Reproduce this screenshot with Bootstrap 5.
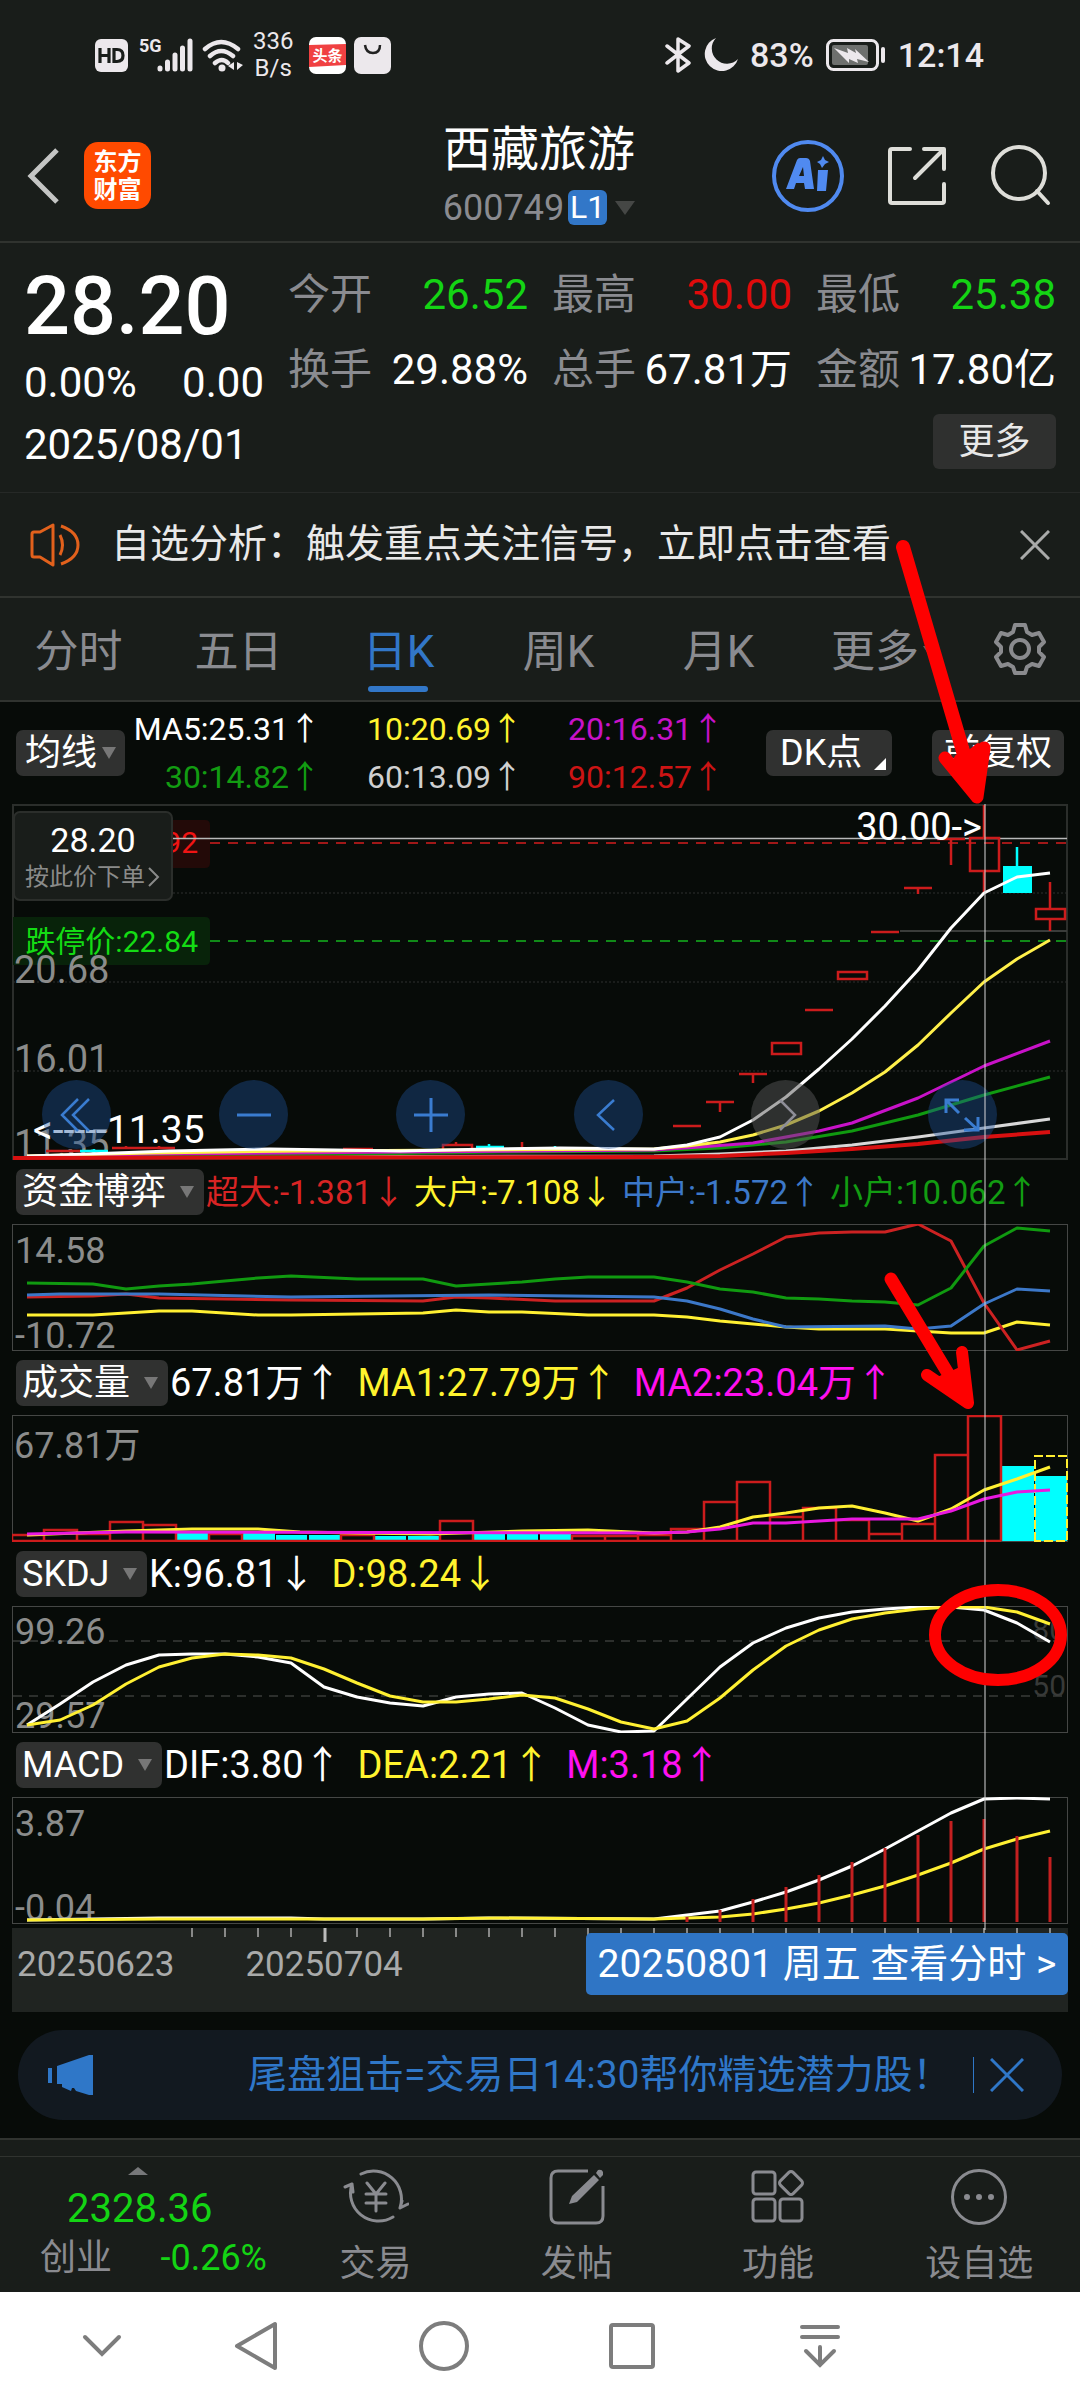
<!DOCTYPE html>
<html lang="zh-CN">
<head>
<meta charset="utf-8">
<meta name="viewport" content="width=device-width, initial-scale=1">
<title>西藏旅游 600749</title>
<link href="https://cdn.jsdelivr.net/npm/bootstrap@5.3.0/dist/css/bootstrap.min.css" rel="stylesheet">
<style>
:root{--panel:#191d1a;--ink:#070b08;--line:#30332f;--dim:#8a8b90;--blue:#3277c8;--up:#e00b0b;--down:#14d414}
body{background:var(--panel);color:#fff;font-family:Roboto,"Noto Sans CJK SC",sans-serif;line-height:1}
svg{display:block;flex:none}
a{text-decoration:none;color:inherit}
button{font-family:inherit;line-height:1;color:inherit}
.plain{background:none;border:0;padding:0}
.statusbar{height:110px;padding:0 96px 0 95px;color:#ece8ec;font-size:34px}
.status-right{gap:12px}
.rate{font-size:24px;line-height:27px}
.sysgen{font-size:18px;line-height:18px}
.signal{margin-left:11px}
.topbar{height:133px;border-bottom:2px solid var(--line);padding:0 29px 0 27px}
.brand{width:67px;height:67px;border-radius:14px;background:#ff4a00;font-size:24px;line-height:28px;font-weight:700;margin-left:24px}
.tools{gap:43px}
.stock-name{font-size:48px;line-height:64px;font-weight:400}
.stock-code{font-size:36px;line-height:52px;color:var(--dim)}
.lv{background:var(--blue);color:#fff;font-size:32px;line-height:35px;border-radius:6px;width:39px}
.caret{width:0;height:0;border:10px solid transparent;border-top:14px solid #454745;border-bottom:0}
.quote{padding:14px 24px 11px;border-bottom:1px solid #262927;font-size:42px}
.q-left{width:240px}
.price{font-size:81px;line-height:100px;font-weight:500}
.l52{line-height:52px}.l74{line-height:72px}
.q-row{line-height:75px;gap:24px}
.q-row>div{flex:1 1 0}
.q-row dt,.q-row dd{margin:0;font-weight:400}
.q-row dt{color:var(--dim)}
.t-up{color:var(--up)}.t-down{color:var(--down)}.t-dim{color:var(--dim)}
.more-btn{background:#2f302f;color:#e8e8e8;font-size:36px;width:123px;height:55px;border-radius:6px;border:0;margin-top:7px}
.notice{height:105px;border-bottom:2px solid var(--line);padding:0 30px;font-size:39px;color:#e9e9e9}
.notice-text{margin-left:31px}
.periods{height:104px;border-bottom:2px solid var(--line);font-size:44px;color:var(--dim)}
.periods .tab{width:160px;height:100%;padding:6px 3px 0 0;position:relative}
.periods .tab-more{padding-left:11px}
.periods .on{color:var(--blue)}
.periods .on::after{content:"";position:absolute;left:48px;bottom:8px;width:60px;height:6px;border-radius:3px;background:var(--blue)}
.charts{background:var(--ink);position:relative;padding:0 12px 18px}
.ma-row{height:102px;padding:0 4px}
.ma-vals{font-size:32px;line-height:48px;margin-left:8px}
.ma-vals span{white-space:nowrap}
.ma-a{width:188px;text-align:right}
.ma-b{width:199px;padding-left:46px}
.ma-c{padding-left:48px}
.pick{position:relative;display:inline-block}
.pick::after{content:"";position:absolute;right:10px;top:17px;border:7px solid transparent;border-top:12px solid #777;border-bottom:0;pointer-events:none}
.pick select{appearance:none;background:#303130;color:#fff;border:0;border-radius:7px;height:46px;line-height:46px;font-size:36px;font-family:inherit;padding:0 37px 0 6px;display:block}
.pick.tight select{padding:0 27px 0 9px}
.pick.tight::after{right:9px}
.chip{background:#303130;border:0;border-radius:7px;height:46px;font-size:36px;position:relative}
.chip-dk{width:126px;padding:0 14px}
.chip-fq{width:132px;padding:0;margin-left:40px}
.chip-dk::after{content:"";position:absolute;right:6px;bottom:6px;border-left:12px solid transparent;border-bottom:12px solid #fff}
.ind-row{height:64px;padding:0 4px;font-size:38px;gap:2px;white-space:nowrap}
.vals{gap:16px}
.vals.slim{font-size:33px;gap:9px}
.c-w{color:#fff}.c-y{color:#fff32e}.c-p{color:#c812c8}.c-m{color:#ff10f0}.c-g{color:#129c12}.c-lg{color:#d0d0d0}.c-r{color:#cc1414}.c-rr{color:#d82424}.c-b{color:#3c78c8}
.plot>svg{width:100%;height:auto}
.plot text{font-size:36px;fill:#8b8c8b}
.main-plot text{font-size:38px}
.plot .tag{font-size:30px}
.plot .lvl{font-size:30px;fill:#383a38}
.plot .peak{fill:#fff}
.crosshair{position:absolute;top:102px;left:91.1%;width:2px;height:1126px;background:rgba(215,215,215,.5);pointer-events:none}
.main-plot{position:relative}
.order-tip{position:absolute;left:1px;top:7px;width:160px;height:90px;background:var(--panel);border:2px solid #2b2e2b;border-radius:7px;font-size:34px}
.order-tip small{font-size:24px;color:#8a8b8a;line-height:24px;white-space:nowrap}
.pads{position:absolute;left:30px;right:71px;bottom:11px}
.pad{width:69px;height:69px;border-radius:50%;background:rgba(30,82,155,.4);border:0;padding:0;color:#3a7cd0}
.pad.off{background:rgba(85,85,85,.5);color:#8e8e98}
.dates{margin-top:4px;background:#202421;height:84px;position:relative;font-size:35px;color:#a9aaa9}
.dates .ticks{position:absolute;left:0;top:0;width:100%;height:auto}
.d-one{margin-left:5px;margin-right:71px}
.day-btn{background:#2f75c5;color:#fff;border:0;border-radius:5px;font-size:39px;height:62px;width:482px;padding:0;white-space:nowrap;position:relative}
.line-up{height:72px}
.promo{margin:18px 6px 0;height:90px;border-radius:45px;background:#121920;color:#2f77c8;font-size:39px;padding:0 38px 0 30px}
.promo-text{margin-left:154px;white-space:nowrap}
.rule{width:1px;height:36px;background:#2f77c8}
.gapbar{height:18px;border-top:2px solid var(--line)}
.actions{height:136px;border-top:1px solid var(--line);font-size:36px;color:var(--dim)}
.idx{width:275px;color:var(--down);position:relative;padding-left:40px;padding-right:8px}
.idx-mark{position:absolute;left:128px;top:10px}
.idx-val{font-size:40px;line-height:48px;padding:28px 0 0 27px}
.idx-row{line-height:50px}
.act{flex:1 1 0}
.act svg{margin:9px auto 16px}
.act span{line-height:40px}
.sysnav{background:#fff;height:108px}
.sysnav button{width:188px;height:108px;color:#7d7d7d}
.sysnav .first{width:162px;padding-left:42px}
.marks{position:absolute;left:0;top:0;width:100%;height:auto;pointer-events:none}
</style>
<script src="https://cdn.jsdelivr.net/npm/bootstrap@5.3.0/dist/js/bootstrap.bundle.min.js"></script>
</head>
<body>
<div class="position-relative overflow-hidden">

<div class="statusbar d-flex align-items-center justify-content-between">
  <div class="d-flex align-items-center">
    <svg width="33" height="33" viewBox="0 0 33 33"><rect width="33" height="33" rx="6" fill="#ece8ec"/><path d="M5 9v15M14 9v15M5 16.500h9M19 10.500v12h3q6 0 6-6t-6-6z" fill="none" stroke="#191d1a" stroke-width="3.200"/></svg>
    <div class="signal position-relative">
      <svg width="54" height="36" viewBox="0 0 54 36"><g stroke="#ece8ec" stroke-width="5" stroke-linecap="round"><path d="M21 31v1M28.500 25v7M36 18v14M43.500 11v21M51 4v28"/></g></svg>
      <span class="sysgen position-absolute top-0 start-0 fw-bold">5G</span>
    </div>
    <svg class="ms-2" width="44" height="36" viewBox="0 0 44 36" fill="none" stroke="#ece8ec" stroke-width="4.500" stroke-linecap="round"><path d="M4 12q16-14 33 0M9 19q11-10 23 0M14 26q7-6 13 0"/><circle cx="21" cy="31" r="3.500" fill="#ece8ec" stroke="none"/><path d="M33 25v8l-6-4zM36 25v8l6-5z" fill="#ece8ec" stroke="none"/></svg>
    <div class="rate text-center ms-2">336<br>B/s</div>
    <div class="d-flex gap-2 ms-3">
      <svg width="37" height="37" viewBox="0 0 37 37"><rect width="37" height="37" rx="7" fill="#fff"/><path d="M0 8l37-1v21l-37 2z" fill="#f04142"/><text x="18.500" y="24" text-anchor="middle" font-size="15" font-weight="700" fill="#fff">头条</text></svg>
      <svg width="37" height="37" viewBox="0 0 37 37"><rect width="37" height="37" rx="7" fill="#ece8ec"/><path d="M11 8q1 8 8 8t7-8" fill="none" stroke="#222" stroke-width="2.500"/></svg>
    </div>
  </div>
  <div class="status-right d-flex align-items-center fw-medium">
    <svg width="28" height="36" viewBox="0 0 28 36" fill="none" stroke="#ece8ec" stroke-width="3.500" stroke-linejoin="round" stroke-linecap="round"><path d="M3 9l22 17-11 8V2l11 7L3 26"/></svg>
    <svg width="34" height="34" viewBox="1 0 34 34"><path d="M13 0a17 17 0 1 0 22 21A15 15 0 0 1 13 0z" fill="#ece8ec"/></svg>
    <span>83%</span>
    <svg width="60" height="32" viewBox="0 0 60 32"><rect x="1.500" y="1.500" width="50" height="29" rx="6" fill="none" stroke="#ece8ec" stroke-width="3"/><rect x="6" y="6" width="36" height="20" rx="2" fill="#6e706e"/><path d="M8 9l14 5-1-5 9 5-1-4 14 13-12-3 1 4-9-4v4z" fill="#ece8ec"/><path d="M57 10v12" stroke="#ece8ec" stroke-width="4" stroke-linecap="round"/></svg>
    <span>12:14</span>
  </div>
</div>

<header class="topbar d-flex align-items-center">
  <div class="d-flex align-items-center flex-fill w-25">
    <button class="plain" aria-label="返回"><svg width="33" height="56" viewBox="0 0 33 56" fill="none" stroke="#c4c5c4" stroke-width="5"><path d="M30 2L4 28l26 26"/></svg></button>
    <div class="brand d-flex flex-column justify-content-center text-center"><span>东方</span><span>财富</span></div>
  </div>
  <div class="text-center">
    <h1 class="stock-name m-0">西藏旅游</h1>
    <div class="stock-code d-flex align-items-center justify-content-center"><span>600749</span><span class="lv ms-1">L1</span><i class="caret ms-2"></i></div>
  </div>
  <div class="tools d-flex align-items-center justify-content-end flex-fill w-25">
    <button class="plain" aria-label="Ai"><svg width="72" height="72" viewBox="0 0 72 72"><circle cx="36" cy="36" r="34" fill="none" stroke="#508af0" stroke-width="4"/><path fill="#508af0" fill-rule="evenodd" d="M14 49L25 20q1-2 3-2h6q3 0 4 3l4 28h-9l-1-6h-8l-2 6zM27 36h5l-1-9zM46 30h10l-2 21h-9zM51 16l2 4 4 2-4 2-3 4-2-4-3-2 4-2z"/></svg></button>
    <button class="plain" aria-label="分享"><svg width="60" height="60" viewBox="0 0 60 60" fill="none" stroke="#deded9" stroke-width="4" stroke-linecap="round" stroke-linejoin="round"><path d="M23 3H5q-2 0-2 2v50q0 2 2 2h50q2 0 2-2V38M37 3h20v20M56 4L28 32"/></svg></button>
    <button class="plain" aria-label="搜索"><svg width="61" height="61" viewBox="0 0 61 61" fill="none" stroke="#deded9" stroke-width="4" stroke-linecap="round"><circle cx="29" cy="28" r="26"/><path d="M47 46l11 12"/></svg></button>
  </div>
</header>

<section class="quote d-flex gap-4">
  <div class="q-left">
    <div class="price">28.20</div>
    <div class="l52 d-flex justify-content-between"><span>0.00%</span><span>0.00</span></div>
    <div class="l74">2025/08/01</div>
  </div>
  <div class="flex-fill">
    <dl class="m-0">
      <div class="q-row d-flex">
        <div class="d-flex justify-content-between"><dt>今开</dt><dd class="t-down">26.52</dd></div>
        <div class="d-flex justify-content-between"><dt>最高</dt><dd class="t-up">30.00</dd></div>
        <div class="d-flex justify-content-between"><dt>最低</dt><dd class="t-down">25.38</dd></div>
      </div>
      <div class="q-row d-flex">
        <div class="d-flex justify-content-between"><dt>换手</dt><dd>29.88%</dd></div>
        <div class="d-flex justify-content-between"><dt>总手</dt><dd>67.81万</dd></div>
        <div class="d-flex justify-content-between"><dt>金额</dt><dd>17.80亿</dd></div>
      </div>
    </dl>
    <div class="text-end"><button class="more-btn">更多</button></div>
  </div>
</section>

<div class="notice d-flex align-items-center">
  <svg width="50" height="44" viewBox="0 0 50 44" fill="none" stroke="#e2611c" stroke-width="3" stroke-linejoin="round"><path d="M2 11q0-2 2-2h6L23 2v40L10 34H4q-2 0-2-2zM30 12q5 10 0 20M31 3q17 6 17 19T31 41"/></svg>
  <span class="notice-text text-nowrap">自选分析：触发重点关注信号，立即点击查看</span>
  <button class="plain ms-auto" aria-label="关闭"><svg width="30" height="30" viewBox="0 0 30 30" stroke="#a9aaa9" stroke-width="3"><path d="M1 1l28 28M29 1L1 29"/></svg></button>
</div>

<nav class="periods d-flex align-items-center">
  <a href="#" class="tab d-flex align-items-center justify-content-center">分时</a>
  <a href="#" class="tab d-flex align-items-center justify-content-center">五日</a>
  <a href="#" class="tab on d-flex align-items-center justify-content-center">日K</a>
  <a href="#" class="tab d-flex align-items-center justify-content-center">周K</a>
  <a href="#" class="tab d-flex align-items-center justify-content-center">月K</a>
  <a href="#" class="tab tab-more d-flex align-items-center justify-content-center">更多<svg width="18" height="12" viewBox="0 0 18 12"><path d="M4 0h14l-7 11z" fill="#606260"/></svg></a>
  <button class="plain flex-fill" aria-label="设置"><svg class="mx-auto" width="54" height="54" viewBox="0 0 54 54" fill="none" stroke="#8a8b8e" stroke-width="4" stroke-linejoin="round"><path d="M22 3h10l2 7 5 3 7-2 5 9-5 5v5l5 5-5 9-7-2-5 3-2 6H22l-2-6-5-3-7 2-5-9 5-5v-5l-5-5 5-9 7 2 5-3z"/><circle cx="27" cy="27" r="9"/></svg></button>
</nav>

<main class="charts">
  <div class="ma-row d-flex align-items-center">
    <label class="pick tight"><select aria-label="均线"><option>均线</option></select></label>
    <div class="ma-vals">
      <div class="d-flex"><span class="ma-a c-w">MA5:25.31↑</span><span class="ma-b c-y">10:20.69↑</span><span class="ma-c c-p">20:16.31↑</span></div>
      <div class="d-flex"><span class="ma-a c-g">30:14.82↑</span><span class="ma-b c-lg">60:13.09↑</span><span class="ma-c c-r">90:12.57↑</span></div>
    </div>
    <button class="chip chip-dk ms-auto text-start">DK点</button>
    <button class="chip chip-fq">前复权</button>
  </div>

  <div class="plot main-plot">
    <svg viewBox="12 804 1056 356">
      <rect x="13" y="805" width="1054" height="354" fill="none" stroke="#2b2e2b" stroke-width="2"/>
      <path d="M13 893H1067M13 982H1067M13 1071H1067" stroke="#2e312e" stroke-width="1" stroke-dasharray="2 2"/>
      <path d="M13 820H205q5 0 5 5v38q0 5-5 5H13z" fill="#230a08"/>
      <path d="M13 917H205q5 0 5 5v38q0 5-5 5H13z" fill="#08230a"/>
      <text class="tag" x="198" y="853" text-anchor="end" style="fill:#f01414">涨停价:27.92</text>
      <text class="tag" x="198" y="952" text-anchor="end" style="fill:#14dc14">跌停价:22.84</text>
      <path d="M172 838.500H1067" stroke="#b8b9b8" stroke-width="1.500"/>
      <path d="M900 931H1067" stroke="#3a3c3a" stroke-width="2"/>
      <path d="M210 843H1067" stroke="#a01818" stroke-width="2" stroke-dasharray="10 8"/>
      <path d="M210 941H1067" stroke="#108a18" stroke-width="2" stroke-dasharray="10 8"/>
      <text x="14" y="983">20.68</text><text x="14" y="1072">16.01</text><text x="14" y="1157">11.35</text>
      <g fill="none" stroke="#cc1c1c" stroke-width="2.500">
        <path d="M46 1151h34M112 1148h63M343 1149h30M443 1145h29v5h-29zM522 1142v5M456 1142v3M126 1146v2M159 1146v2"/>
        <path d="M673 1126h28M706 1102h28M720 1102v10M739 1074h28M753 1074v9M805 1010h28M871 932h28M904 888h28M918 888v6M937 839h28M951 839v26"/>
        <path d="M772 1043h29v11h-29zM838 972h29v7h-29zM970 838h29v33h-29zM1036 909h29v10h-29zM984 805v33M984 871v23M1050 882v27M1050 919v12"/>
      </g>
      <path d="M1017 847v20" stroke="#0ff" stroke-width="2.500"/><rect x="1003" y="866" width="29" height="27" fill="#0ff"/>
      <path d="M80 1151h28M94 1149v4M476 1147h28M489 1144v5M555 1146v3" stroke="#0ff" stroke-width="2.500"/>
      <g fill="none" stroke-width="3" stroke-linejoin="round">
        <path stroke="#d8d8d8" d="M27 1157L654 1156 720 1154 786 1151 852 1145 918 1137 984 1128 1050 1119"/>
        <path stroke="#109a10" d="M27 1157L300 1155 500 1152 654 1151 720 1148 786 1142 852 1131 918 1115 984 1095 1050 1077"/>
        <path stroke="#c812c8" d="M27 1157L150 1154 400 1152 654 1150 700 1147 753 1143 819 1131 852 1123 918 1098 984 1066 1050 1041"/>
        <path stroke="#fff04a" d="M27 1156L150 1153 300 1151 654 1149 687 1146 720 1142 753 1135 786 1125 819 1111 852 1093 885 1072 918 1045 951 1013 984 982 1017 959 1050 940"/>
        <path stroke="#fff" d="M27 1156L60 1155 170 1151 270 1149 400 1151 490 1149 560 1148 654 1149 687 1145 720 1137 753 1120 786 1097 819 1069 852 1039 885 1006 918 970 951 928 984 893 1017 877 1050 873"/>
        <path stroke="#d81010" stroke-width="4" d="M13 1158L654 1157 720 1156 786 1153 852 1149 918 1144 984 1137 1050 1132"/>
      </g>
      <text class="peak" x="982" y="840" text-anchor="end">30.00-&gt;</text>
      <text class="peak" x="33" y="1143" style="font-size:39px">&lt;-----11.35</text>
    </svg>
    <button class="order-tip p-0 d-flex flex-column align-items-center justify-content-center gap-2 text-white"><span>28.20</span><small class="d-flex align-items-center">按此价下单<svg width="16" height="22" viewBox="0 0 16 22" fill="none" stroke="#8a8b8a" stroke-width="2"><path d="M4 2l9 9-9 9"/></svg></small></button>
    <div class="pads d-flex justify-content-between">
      <button class="pad" aria-label="最左"><svg class="mx-auto" width="34" height="34" viewBox="0 0 34 34" fill="none" stroke="currentColor" stroke-width="2.500"><path d="M18 1L2 17l16 16M29 1L13 17l16 16"/></svg></button>
      <button class="pad" aria-label="缩小"><svg class="mx-auto" width="34" height="34" viewBox="0 0 34 34" stroke="currentColor" stroke-width="3"><path d="M0 17h34"/></svg></button>
      <button class="pad" aria-label="放大"><svg class="mx-auto" width="34" height="34" viewBox="0 0 34 34" stroke="currentColor" stroke-width="3"><path d="M0 17h34M17 0v34"/></svg></button>
      <button class="pad" aria-label="左移"><svg class="mx-auto" width="34" height="34" viewBox="0 0 34 34" fill="none" stroke="currentColor" stroke-width="2.500"><path d="M23 2L7 17l16 15"/></svg></button>
      <button class="pad off" aria-label="右移"><svg class="mx-auto" width="34" height="34" viewBox="0 0 34 34" fill="none" stroke="currentColor" stroke-width="2.500"><path d="M12 2l15 15-15 15"/></svg></button>
      <button class="pad" aria-label="全屏"><svg class="mx-auto" width="36" height="36" viewBox="0 0 36 36" fill="none" stroke="currentColor" stroke-width="3"><path d="M2 16V3h13M3 4l12 12M34 20v13H20M33 32L21 21"/></svg></button>
    </div>
  </div>

  <div class="ind-row d-flex align-items-center">
    <label class="pick"><select aria-label="资金博弈"><option>资金博弈</option></select></label>
    <div class="vals slim d-flex"><span class="c-rr">超大:-1.381↓</span><span class="c-y">大户:-7.108↓</span><span class="c-b">中户:-1.572↑</span><span class="c-g">小户:10.062↑</span></div>
  </div>
  <div class="plot">
    <svg viewBox="12 1224 1056 127">
      <rect x="12.500" y="1224.500" width="1055" height="126" fill="none" stroke="#454745"/>
      <text x="15" y="1263">14.58</text><text x="15" y="1348">-10.72</text>
      <g fill="none" stroke-width="3" stroke-linejoin="round">
        <path stroke="#fff032" d="M27 1315L93 1315 126 1313 159 1311 192 1311 258 1315 291 1315 357 1314 423 1313 456 1310 489 1312 522 1312 588 1315 654 1315 687 1317 720 1321 753 1324 786 1327 819 1329 885 1329 918 1331 951 1333 984 1333 1017 1322 1050 1325"/>
        <path stroke="#cc2222" d="M27 1297L93 1296 126 1294 159 1298 225 1299 291 1300 423 1301 456 1297 489 1298 555 1301 654 1301 687 1288 720 1270 753 1254 786 1237 819 1233 852 1232 885 1232 918 1224 951 1241 984 1303 1017 1350 1050 1341"/>
        <path stroke="#109a10" d="M27 1283L93 1284 126 1289 159 1286 192 1284 225 1281 258 1278 291 1276 357 1279 423 1279 456 1286 522 1282 555 1279 588 1277 654 1277 687 1282 720 1289 753 1292 786 1298 819 1299 852 1301 885 1302 918 1305 951 1288 984 1246 1017 1228 1050 1231"/>
        <path stroke="#3c78c8" d="M27 1295L60 1294 159 1294 291 1297 390 1296 489 1295 654 1297 687 1301 720 1309 753 1319 786 1327 885 1326 918 1329 951 1326 984 1304 1017 1289 1050 1291"/>
      </g>
    </svg>
  </div>

  <div class="ind-row d-flex align-items-center">
    <label class="pick"><select aria-label="成交量"><option>成交量</option></select></label>
    <div class="vals d-flex"><span class="c-w">67.81万↑</span><span class="c-y">MA1:27.79万↑</span><span class="c-m">MA2:23.04万↑</span></div>
  </div>
  <div class="plot">
    <svg viewBox="12 1415 1056 127">
      <rect x="12.500" y="1415.500" width="1055" height="126" fill="none" stroke="#454745"/>
      <text x="14" y="1458">67.81万</text>
      <g fill="#0ff"><path d="M177 1533h31v8h-31zM243 1533h32v8h-32zM276 1535h31v6h-31zM309 1535h31v6h-31zM375 1536h31v5h-31zM408 1536h31v5h-31zM474 1534h31v7h-31zM507 1534h31v7h-31zM540 1534h31v7h-31zM1002 1466h32v75h-32zM1035 1476h32v65h-32z"/></g>
      <path fill="none" stroke="#cc1c1c" stroke-width="2.500" d="M12 1541V1535h32V1541M44 1541V1530h33V1541M77 1541V1534h33V1541M110 1541V1522h33V1541M143 1541V1525h33V1541M209 1541V1534h33V1541M341 1541V1535h33V1541M440 1541V1521h33V1541M572 1541V1536h33V1541M605 1541V1536h33V1541M638 1541V1535h33V1541M671 1541V1529h33V1541M704 1541V1502h33V1541M737 1541V1482h33V1541M770 1541V1517h33V1541M803 1541V1508h33V1541M836 1541V1520h33V1541M869 1541V1534h33V1541M902 1541V1524h33V1541M935 1541V1455h33V1541M968 1541V1416h33V1541M12 1541H1001"/>
      <path d="M1035 1541V1456h32v85z" fill="none" stroke="#ffee30" stroke-width="2" stroke-dasharray="9 3"/>
      <g fill="none" stroke-width="3" stroke-linejoin="round">
        <path stroke="#fff032" d="M27 1535L126 1531 192 1529 258 1529 300 1532 357 1533 430 1534 522 1531 588 1530 654 1533 687 1532 720 1527 753 1517 786 1513 819 1508 852 1506 885 1513 918 1521 951 1509 984 1490 1017 1479 1050 1467"/>
        <path stroke="#e818e0" d="M27 1534L126 1532 654 1533 687 1532 720 1529 753 1523 786 1523 819 1521 852 1519 918 1519 951 1511 984 1499 1017 1492 1050 1490"/>
      </g>
    </svg>
  </div>

  <div class="ind-row d-flex align-items-center">
    <label class="pick"><select aria-label="SKDJ"><option>SKDJ</option></select></label>
    <div class="vals d-flex"><span class="c-w">K:96.81↓</span><span class="c-y">D:98.24↓</span></div>
  </div>
  <div class="plot">
    <svg viewBox="12 1606 1056 127">
      <rect x="12.500" y="1606.500" width="1055" height="126" fill="none" stroke="#454745"/>
      <path d="M13 1641H1067M13 1696H1067" stroke="#2c2f2c" stroke-width="2" stroke-dasharray="9 7"/>
      <text class="lvl" x="1066" y="1640" text-anchor="end">80</text><text class="lvl" x="1066" y="1696" text-anchor="end">50</text>
      <text x="15" y="1644">99.26</text><text x="15" y="1728">29.57</text>
      <g fill="none" stroke-width="3" stroke-linejoin="round">
        <path stroke="#fff" d="M27 1725L60 1704 93 1682 126 1665 159 1655 192 1654 225 1654 258 1657 291 1663 324 1687 357 1697 390 1703 423 1706 456 1697 489 1694 522 1693 555 1708 588 1725 621 1732 654 1731 687 1699 720 1667 753 1643 786 1628 819 1618 852 1612 885 1609 918 1607 951 1607 984 1610 1017 1623 1050 1642"/>
        <path stroke="#fff032" d="M27 1725L60 1720 93 1705 126 1684 159 1667 192 1658 225 1654 258 1655 291 1658 324 1669 357 1683 390 1696 423 1702 456 1702 489 1699 522 1695 555 1698 588 1709 621 1722 654 1729 687 1721 720 1698 753 1670 786 1646 819 1630 852 1619 885 1613 918 1609 951 1607 984 1607 1017 1612 1050 1624"/>
      </g>
    </svg>
  </div>

  <div class="ind-row d-flex align-items-center">
    <label class="pick"><select aria-label="MACD"><option>MACD</option></select></label>
    <div class="vals d-flex"><span class="c-w">DIF:3.80↑</span><span class="c-y">DEA:2.21↑</span><span class="c-m">M:3.18↑</span></div>
  </div>
  <div class="plot">
    <svg viewBox="12 1797 1056 127">
      <rect x="12.500" y="1797.500" width="1055" height="126" fill="none" stroke="#454745"/>
      <text x="15" y="1836">3.87</text><text x="15" y="1920">-0.04</text>
      <g fill="none" stroke-width="3" stroke-linejoin="round">
        <path stroke="#fff" d="M27 1920L159 1918 291 1918 324 1919 423 1919 489 1918 654 1919 687 1915 720 1911 753 1902 786 1892 819 1880 852 1866 885 1849 918 1831 951 1813 984 1799 1017 1798 1050 1799"/>
        <path stroke="#fff032" d="M27 1920L159 1919 291 1919 423 1919 500 1918 654 1919 687 1918 720 1917 753 1914 786 1909 819 1903 852 1895 885 1886 918 1875 951 1863 984 1849 1017 1839 1050 1831"/>
        <path stroke="#c42020" d="M687 1922V1917M720 1922V1910M753 1922V1899M786 1922V1887M819 1922V1875M852 1922V1862M885 1922V1848M918 1922V1835M951 1922V1821M984 1922V1819M1017 1922V1836M1050 1922V1857"/>
      </g>
    </svg>
  </div>

  <div class="dates">
    <svg class="ticks" viewBox="12 1928 1056 20"><path d="M192 1928v9M225 1928v9M258 1928v9M291 1928v9M357 1928v9M390 1928v9M423 1928v9M456 1928v9M489 1928v9M522 1928v9M555 1928v9M588 1928v9M621 1928v9M654 1928v9M687 1928v9M720 1928v9M753 1928v9M786 1928v9M819 1928v9M852 1928v9M885 1928v9M918 1928v9M951 1928v9M984 1928v9M1017 1928v9M1050 1928v9" stroke="#aaa" stroke-width="1.500"/><path d="M325 1928v14" stroke="#bbb" stroke-width="3"/></svg>
    <div class="line-up d-flex align-items-center">
      <span class="d-one">20250623</span><span>20250704</span>
      <button class="day-btn ms-auto">20250801 周五 查看分时 &gt;</button>
    </div>
  </div>
  <div class="crosshair"></div>

  <div class="promo d-flex align-items-center">
    <svg width="46" height="40" viewBox="0 0 46 40" fill="#2f77c8"><path d="M0 13h4v15H0zM9 11L41 0h4v40h-4l-13-4-2-3h-2l-1 3-9-4v-3H9z"/></svg>
    <span class="promo-text">尾盘狙击=交易日14:30帮你精选潜力股！</span>
    <i class="rule ms-auto"></i>
    <button class="plain ms-3" aria-label="关闭广告"><svg width="34" height="34" viewBox="0 0 34 34" stroke="#2f77c8" stroke-width="3"><path d="M1 1l32 32M33 1L1 33"/></svg></button>
  </div>
</main>
<div class="gapbar"></div>

<footer class="actions d-flex">
  <a href="#" class="idx d-block">
    <svg class="idx-mark" width="20" height="8" viewBox="0 0 20 8"><path d="M0 8L10 0l10 8z" fill="#77787a"/></svg>
    <div class="idx-val">2328.36</div>
    <div class="idx-row d-flex justify-content-between"><span class="t-dim">创业</span><span>-0.26%</span></div>
  </a>
  <a href="#" class="act text-center"><svg width="66" height="62" viewBox="0 0 66 62" fill="none" stroke="#8a8b90" stroke-width="3" stroke-linecap="round" stroke-linejoin="round"><path d="M18 8A28 28 0 0 1 57 42l8-4M50 51A28 28 0 0 1 9 18l-7 3M57 42l2-7M9 18l1 8M24 17l9 11 9-11M33 28v17M23 28h20M23 37h20"/></svg><span>交易</span></a>
  <a href="#" class="act text-center"><svg width="58" height="62" viewBox="0 0 58 62" fill="none" stroke="#8a8b90" stroke-width="3"><path d="M40 5H10q-7 0-7 7v38q0 7 7 7h38q7 0 7-7V20"/><path d="M21 38l3-8 22-21 5 5-22 22zM48 7l2-3q4-1 5 2v3l-3 3z" fill="#8a8b90" stroke="none"/></svg><span>发帖</span></a>
  <a href="#" class="act text-center"><svg width="54" height="62" viewBox="0 0 54 62" fill="none" stroke="#8a8b90" stroke-width="3"><rect x="2" y="6" width="22" height="22" rx="3"/><rect x="2" y="33" width="22" height="22" rx="3"/><rect x="29" y="33" width="22" height="22" rx="3"/><rect x="31" y="8" width="18" height="18" rx="3" transform="rotate(45 40 17)"/></svg><span>功能</span></a>
  <a href="#" class="act text-center"><svg width="58" height="62" viewBox="0 0 58 62" fill="none" stroke="#8a8b90" stroke-width="3"><circle cx="29" cy="31" r="26.500"/><g fill="#8a8b90" stroke="none"><circle cx="17" cy="31" r="3"/><circle cx="29" cy="31" r="3"/><circle cx="41" cy="31" r="3"/></g></svg><span>设自选</span></a>
</footer>

<div class="sysnav d-flex">
  <button class="plain first" aria-label="收起"><svg class="mx-auto" width="40" height="24" viewBox="0 0 40 24" fill="none" stroke="currentColor" stroke-width="4" stroke-linecap="round"><path d="M3 3l17 17L37 3"/></svg></button>
  <button class="plain" aria-label="返回"><svg class="mx-auto" width="46" height="52" viewBox="0 0 46 52" fill="none" stroke="currentColor" stroke-width="4" stroke-linejoin="round"><path d="M42 4v44L4 26z"/></svg></button>
  <button class="plain" aria-label="主屏"><svg class="mx-auto" width="52" height="52" viewBox="0 0 52 52" fill="none" stroke="currentColor" stroke-width="4"><circle cx="26" cy="26" r="23"/></svg></button>
  <button class="plain" aria-label="最近任务"><svg class="mx-auto" width="48" height="48" viewBox="0 0 48 48" fill="none" stroke="currentColor" stroke-width="4"><rect x="3" y="3" width="42" height="42" rx="2"/></svg></button>
  <button class="plain" aria-label="通知"><svg class="mx-auto" width="42" height="46" viewBox="0 0 42 46" fill="none" stroke="currentColor" stroke-width="4" stroke-linecap="round"><path d="M3 4h36M3 14h36M21 24v18M7 28l14 14 14-14"/></svg></button>
</div>

<svg class="marks" viewBox="0 0 1080 2400" fill="none" stroke="#fe0000" stroke-linecap="round" stroke-linejoin="round">
  <path d="M903 547L970 775" stroke-width="14"/>
  <path d="M945 758L977 797L984 748M960 760L977 797" stroke-width="13"/><path d="M952 766L978 800L978 745z" fill="#fe0000" stroke-width="4"/>
  <path d="M891 1279L955 1385" stroke-width="13"/>
  <path d="M927 1375L968 1403L962 1352M950 1378L968 1403" stroke-width="12"/><path d="M935 1380L968 1404L958 1370z" fill="#fe0000" stroke-width="4"/>
  <ellipse cx="998" cy="1635" rx="63" ry="45" stroke-width="12"/>
</svg>
</div>
</body>
</html>
